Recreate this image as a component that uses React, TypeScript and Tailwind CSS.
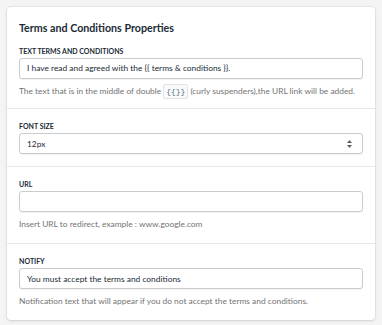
const font = { fontFamily: 'Lato, "Noto Sans", sans-serif' };

function Label({ children }: { children: React.ReactNode }) {
    return (
        <div className="text-[7px] leading-[14px] font-bold uppercase text-[#212b36]">
            {children}
        </div>
    );
}

function Help({ children }: { children: React.ReactNode }) {
    return (
        <div className="mt-[4px] text-[8.4px] leading-4 text-[#737373]">
            {children}
        </div>
    );
}

function TextField({ value }: { value: string }) {
    return (
        <div className="flex h-[21px] items-center rounded-[3px] border border-[#c9cccf] bg-white px-[7px] text-[8.4px] text-[#212b36] shadow-[0_1px_0_rgba(0,0,0,0.05)]">
            {value}
        </div>
    );
}

function SortArrows() {
    return (
        <svg width="5" height="8" viewBox="0 0 5 8" className="text-[#5c5f62]">
            <path d="M2.5 0 L5 3 L0 3 Z" fill="currentColor" />
            <path d="M0 5 L5 5 L2.5 8 Z" fill="currentColor" />
        </svg>
    );
}

export default function App() {
    return (
        <div
            className="min-h-[325px] w-[382px] bg-[#f4f4f4] px-[7px] pt-[7px] pb-2"
            style={font}
        >
            <div className="rounded-[4px] bg-white shadow-[0_0_0_1px_rgba(63,63,68,0.05),0_1px_3px_rgba(63,63,68,0.15)]">
                <div className="px-3 pt-3 pb-[9px]">
                    <div className="mb-[7px] text-[10.7px] leading-[18px] font-bold text-[#212b36]">
                        Terms and Conditions Properties
                    </div>
                    <Label>Text terms and conditions</Label>
                    <TextField value="I have read and agreed with the {{ terms & conditions }}." />
                    <Help>
                        The text that is in the middle of double
                        <span className="mx-[2px] inline-block rounded-[2px] border border-[#dfe3e8] bg-[#f9fafb] px-[2px] align-middle font-mono text-[8px] leading-[13px] text-[#637381]">
                            {'{{}}'}
                        </span>
                        (curly suspenders),the URL link will be added.
                    </Help>
                </div>
                <div className="border-t border-[#e9e9e9] px-3 pt-[10px] pb-3">
                    <Label>Font size</Label>
                    <div className="flex h-[21px] items-center justify-between rounded-[3px] border border-[#c9cccf] bg-white pr-[10px] pl-[7px] text-[8.4px] text-[#212b36] shadow-[0_1px_0_rgba(0,0,0,0.05)]">
                        <span>12px</span>
                        <SortArrows />
                    </div>
                </div>
                <div className="border-t border-[#e9e9e9] px-3 pt-[10px] pb-[11px]">
                    <Label>URL</Label>
                    <TextField value="" />
                    <Help>Insert URL to redirect, example : www.google.com</Help>
                </div>
                <div className="border-t border-[#e9e9e9] px-3 pt-[10px] pb-[11px]">
                    <Label>Notify</Label>
                    <TextField value="You must accept the terms and conditions" />
                    <Help>Notification text that will appear if you do not accept the terms and conditions.</Help>
                </div>
            </div>
        </div>
    );
}
